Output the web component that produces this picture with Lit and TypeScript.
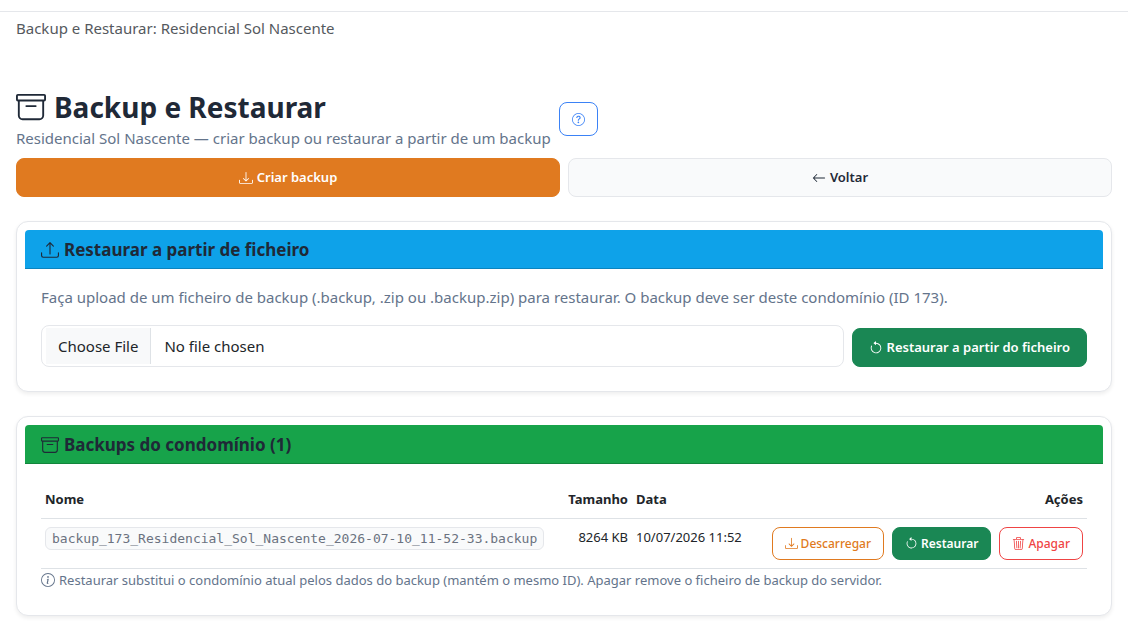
import { LitElement, html, css, svg } from "lit";
import { customElement, property, state } from "lit/decorators.js";

const ICONS: Record<string, string[]> = {
  archive: [
    "M0 2a1 1 0 0 1 1-1h14a1 1 0 0 1 1 1v2a1 1 0 0 1-1 1v7.5a2.5 2.5 0 0 1-2.5 2.5h-9A2.5 2.5 0 0 1 1 12.5V5a1 1 0 0 1-1-1zm2 3v7.5A1.5 1.5 0 0 0 3.5 14h9a1.5 1.5 0 0 0 1.5-1.5V5zm13-3H1v2h14zM5 7.5a.5.5 0 0 1 .5-.5h5a.5.5 0 0 1 0 1h-5a.5.5 0 0 1-.5-.5",
  ],
  download: [
    "M.5 9.9a.5.5 0 0 1 .5.5v2.5a1 1 0 0 0 1 1h12a1 1 0 0 0 1-1v-2.5a.5.5 0 0 1 1 0v2.5a2 2 0 0 1-2 2H2a2 2 0 0 1-2-2v-2.5a.5.5 0 0 1 .5-.5",
    "M7.646 11.854a.5.5 0 0 0 .708 0l3-3a.5.5 0 0 0-.708-.708L8.5 10.293V1.5a.5.5 0 0 0-1 0v8.793L5.354 8.146a.5.5 0 1 0-.708.708z",
  ],
  upload: [
    "M.5 9.9a.5.5 0 0 1 .5.5v2.5a1 1 0 0 0 1 1h12a1 1 0 0 0 1-1v-2.5a.5.5 0 0 1 1 0v2.5a2 2 0 0 1-2 2H2a2 2 0 0 1-2-2v-2.5a.5.5 0 0 1 .5-.5",
    "M7.646 1.146a.5.5 0 0 1 .708 0l3 3a.5.5 0 0 1-.708.708L8.5 2.707V11.5a.5.5 0 0 1-1 0V2.707L5.354 4.854a.5.5 0 1 1-.708-.708z",
  ],
  back: [
    "M15 8a.5.5 0 0 0-.5-.5H2.707l3.147-3.146a.5.5 0 1 0-.708-.708l-4 4a.5.5 0 0 0 0 .708l4 4a.5.5 0 0 0 .708-.708L2.707 8.5H14.5A.5.5 0 0 0 15 8",
  ],
  restore: [
    "M8 3a5 5 0 1 1-4.546 2.914.5.5 0 0 0-.908-.417A6 6 0 1 0 8 2z",
    "M8 4.466V.534a.25.25 0 0 0-.41-.192L5.23 2.308a.25.25 0 0 0 0 .384l2.36 1.966A.25.25 0 0 0 8 4.466",
  ],
  help: [
    "M8 15A7 7 0 1 1 8 1a7 7 0 0 1 0 14m0 1A8 8 0 1 0 8 0a8 8 0 0 0 0 16",
    "M5.255 5.786a.237.237 0 0 0 .241.247h.825c.138 0 .248-.113.266-.25.09-.656.54-1.134 1.342-1.134.686 0 1.314.343 1.314 1.168 0 .635-.374.927-.965 1.371-.673.489-1.206 1.06-1.168 1.987l.003.217a.25.25 0 0 0 .25.246h.811a.25.25 0 0 0 .25-.25v-.105c0-.718.273-.927 1.01-1.486.609-.463 1.244-.977 1.244-2.056 0-1.511-1.276-2.241-2.673-2.241-1.267 0-2.655.59-2.75 2.286m1.557 5.763c0 .533.425.927 1.01.927.609 0 1.028-.394 1.028-.927 0-.552-.42-.94-1.029-.94-.584 0-1.009.388-1.009.94",
  ],
  info: [
    "M8 15A7 7 0 1 1 8 1a7 7 0 0 1 0 14m0 1A8 8 0 1 0 8 0a8 8 0 0 0 0 16",
    "m8.93 6.588-2.29.287-.082.38.45.083c.294.07.352.176.288.469l-.738 3.468c-.194.897.105 1.319.808 1.319.545 0 1.178-.252 1.465-.598l.088-.416c-.2.176-.492.246-.686.246-.275 0-.375-.193-.304-.533zM9 4.5a1 1 0 1 1-2 0 1 1 0 0 1 2 0",
  ],
  trash: [
    "M6.5 1h3a.5.5 0 0 1 .5.5v1H6v-1a.5.5 0 0 1 .5-.5M11 2.5v-1A1.5 1.5 0 0 0 9.5 0h-3A1.5 1.5 0 0 0 5 1.5v1H1.5a.5.5 0 0 0 0 1h.538l.853 10.66A2 2 0 0 0 4.885 16h6.23a2 2 0 0 0 1.994-1.84l.853-10.66h.538a.5.5 0 0 0 0-1zm1.958 1-.846 10.58a1 1 0 0 1-.997.92h-6.23a1 1 0 0 1-.997-.92L3.042 3.5zm-7.487 1a.5.5 0 0 1 .528.47l.5 8.5a.5.5 0 0 1-.998.06L5 5.03a.5.5 0 0 1 .47-.53Zm5.058 0a.5.5 0 0 1 .47.53l-.5 8.5a.5.5 0 1 1-.998-.06l.5-8.5a.5.5 0 0 1 .528-.47M8 4.5a.5.5 0 0 1 .5.5v8.5a.5.5 0 0 1-1 0V5a.5.5 0 0 1 .5-.5",
  ],
};

@customElement("bi-icon")
export class BiIcon extends LitElement {
  @property() name = "archive";

  static styles = css`
    :host {
      display: inline-flex;
      flex: none;
      width: 1em;
      height: 1em;
    }
    .glyph {
      width: 100%;
      height: 100%;
      fill: currentColor;
    }
  `;

  render() {
    return html`<svg class="glyph" viewBox="0 0 16 16" aria-hidden="true">
      ${ICONS[this.name].map((d) => svg`<path d=${d}></path>`)}
    </svg>`;
  }
}

interface Backup {
  name: string;
  size: string;
  date: string;
}

@customElement("app-root")
export class AppRoot extends LitElement {
  @state() private backups: Backup[] = [
    {
      name: "backup_173_Residencial_Sol_Nascente_2026-07-10_11-52-33.backup",
      size: "8264 KB",
      date: "10/07/2026 11:52",
    },
  ];

  static styles = css`
    :host {
      display: block;
      color: #212529;
      background: #fff;
      font-family: "Segoe UI", "Noto Sans", "Open Sans", sans-serif;
      font-size: 15px;
      line-height: 24px;
    }
    * {
      box-sizing: border-box;
    }
    .topbar {
      height: 12px;
      border-bottom: 1px solid #e5e7eb;
    }
    .crumb {
      padding: 4px 16px;
      color: #55595e;
    }
    .page {
      display: flex;
      flex-direction: column;
      padding: 44px 16px 12px;
    }
    .heading {
      display: flex;
      align-items: center;
      gap: 8px;
      margin-bottom: 8px;
    }
    .title {
      display: flex;
      align-items: center;
      gap: 8px;
      margin: 0;
      color: #1f2937;
      font-size: 28px;
      line-height: 38px;
      font-weight: 700;
    }
    .title bi-icon {
      font-size: 30px;
    }
    .muted {
      margin: 0;
      color: #64748b;
    }
    .btn {
      display: inline-flex;
      align-items: center;
      justify-content: center;
      gap: 4px;
      padding: 8px 16px;
      border: 1px solid transparent;
      border-radius: 8px;
      background: #fff;
      font-family: inherit;
      font-size: 13px;
      line-height: 21px;
      font-weight: 600;
      white-space: nowrap;
      cursor: pointer;
    }
    .btn bi-icon {
      font-size: 14px;
    }
    .small {
      gap: 3px;
      padding: 5px 12px;
      font-size: 12px;
    }
    .small bi-icon {
      font-size: 13px;
    }
    .primary {
      background: #e07a20;
      border-color: #e07a20;
      color: #fff;
    }
    .light {
      background: #f9fafb;
      border-color: #e5e7eb;
      color: #1f2937;
    }
    .success {
      background: #1a8754;
      border-color: #1a8754;
      color: #fff;
    }
    .outline-blue {
      height: 34px;
      border-color: #3b82f6;
      color: #3b82f6;
    }
    .outline-orange {
      border-color: #e07a20;
      color: #e07a20;
      font-weight: 500;
    }
    .outline-red {
      border-color: #ef4444;
      color: #ef4444;
      font-weight: 500;
    }
    .toolbar {
      display: grid;
      grid-template-columns: 1fr 1fr;
      gap: 8px;
      margin-bottom: 24px;
    }
    .card {
      padding: 8px;
      margin-bottom: 24px;
      border: 1px solid #e5e7eb;
      border-radius: 12px;
      background: #fff;
      box-shadow: 0 2px 4px rgba(0, 0, 0, 0.07);
    }
    .card:last-child {
      margin-bottom: 0;
    }
    .card-head {
      display: flex;
      align-items: center;
      padding: 8px 16px 6px;
      border-bottom: 1px solid rgba(0, 0, 0, 0.18);
      border-radius: 4px 4px 0 0;
    }
    .blue {
      background: #0ea2e9;
    }
    .green {
      background: #17a34a;
    }
    .card-title {
      display: flex;
      align-items: center;
      gap: 5px;
      margin: 0;
      color: #1f2937;
      font-size: 17px;
      font-weight: 700;
    }
    .card-title bi-icon {
      font-size: 18px;
    }
    .card-body {
      padding: 16px;
    }
    .upload {
      display: flex;
      align-items: flex-end;
      gap: 8px;
      margin-top: 16px;
    }
    .file {
      flex: 1;
      min-width: 0;
      height: 42px;
      padding: 2px 4px;
      border: 1px solid #e5e7eb;
      border-radius: 8px;
      color: #212529;
      font-family: inherit;
      font-size: 15px;
      line-height: 24px;
    }
    .file::file-selector-button {
      height: 36px;
      margin: 0 13px 0 0;
      padding: 0 12px;
      border: 0;
      border-right: 1px solid #dee2e6;
      background: #f8f9fa;
      color: #212529;
      font-family: inherit;
      font-size: 15px;
    }
    .table {
      width: 100%;
      border-collapse: collapse;
      font-size: 13px;
      line-height: 21px;
    }
    .table th,
    .table td {
      padding: 8px 4px;
      border-bottom: 1px solid #dee2e6;
      text-align: left;
      vertical-align: top;
      white-space: nowrap;
    }
    .table .num {
      text-align: right;
    }
    .col-name {
      width: 50%;
    }
    .col-size {
      width: 68px;
    }
    .table-wrap {
      padding-top: 1px;
    }
    .code {
      display: inline-block;
      padding: 0 6px;
      border: 1px solid #e5e7eb;
      border-radius: 6px;
      background: #f9fafb;
      color: #6b7280;
      font-family: Consolas, "DejaVu Sans Mono", monospace;
      font-size: 13px;
    }
    .actions {
      display: flex;
      justify-content: flex-end;
      gap: 8px;
    }
    .note {
      display: flex;
      align-items: center;
      gap: 4px;
      font-size: 13px;
      line-height: 22px;
    }
    .note bi-icon {
      font-size: 14px;
    }
  `;

  render() {
    return html`
      <div class="topbar"></div>
      <div class="crumb">Backup e Restaurar: Residencial Sol Nascente</div>
      <main class="page">
        <header class="heading">
          <div>
            <h1 class="title"><bi-icon name="archive"></bi-icon>Backup e Restaurar</h1>
            <p class="muted">Residencial Sol Nascente — criar backup ou restaurar a partir de um backup</p>
          </div>
          <button class="btn small outline-blue" aria-label="Ajuda"><bi-icon name="help"></bi-icon></button>
        </header>
        <div class="toolbar">
          <button class="btn primary"><bi-icon name="download"></bi-icon>Criar backup</button>
          <button class="btn light"><bi-icon name="back"></bi-icon>Voltar</button>
        </div>

        <section class="card">
          <div class="card-head blue">
            <h2 class="card-title"><bi-icon name="upload"></bi-icon>Restaurar a partir de ficheiro</h2>
          </div>
          <div class="card-body">
            <label class="muted" for="backup-file">
              Faça upload de um ficheiro de backup (.backup, .zip ou .backup.zip) para restaurar. O backup deve ser
              deste condomínio (ID 173).
            </label>
            <form class="upload" @submit=${(e: Event) => e.preventDefault()}>
              <input class="file" id="backup-file" type="file" accept=".backup,.zip" />
              <button class="btn success" type="submit">
                <bi-icon name="restore"></bi-icon>Restaurar a partir do ficheiro
              </button>
            </form>
          </div>
        </section>

        <section class="card">
          <div class="card-head green">
            <h2 class="card-title">
              <bi-icon name="archive"></bi-icon>Backups do condomínio (${this.backups.length})
            </h2>
          </div>
          <div class="card-body">
            <div class="table-wrap">
              <table class="table">
                <thead>
                  <tr>
                    <th class="col-name">Nome</th>
                    <th class="num col-size">Tamanho</th>
                    <th>Data</th>
                    <th class="num">Ações</th>
                  </tr>
                </thead>
                <tbody>
                  ${this.backups.map(
                    (b) => html`<tr>
                      <td><code class="code">${b.name}</code></td>
                      <td class="num">${b.size}</td>
                      <td>${b.date}</td>
                      <td>
                        <div class="actions">
                          <button class="btn small outline-orange"><bi-icon name="download"></bi-icon>Descarregar</button>
                          <button class="btn small success"><bi-icon name="restore"></bi-icon>Restaurar</button>
                          <button class="btn small outline-red"><bi-icon name="trash"></bi-icon>Apagar</button>
                        </div>
                      </td>
                    </tr>`
                  )}
                </tbody>
              </table>
            </div>
            <p class="muted note">
              <bi-icon name="info"></bi-icon>Restaurar substitui o condomínio atual pelos dados do backup (mantém o
              mesmo ID). Apagar remove o ficheiro de backup do servidor.
            </p>
          </div>
        </section>
      </main>
    `;
  }
}
